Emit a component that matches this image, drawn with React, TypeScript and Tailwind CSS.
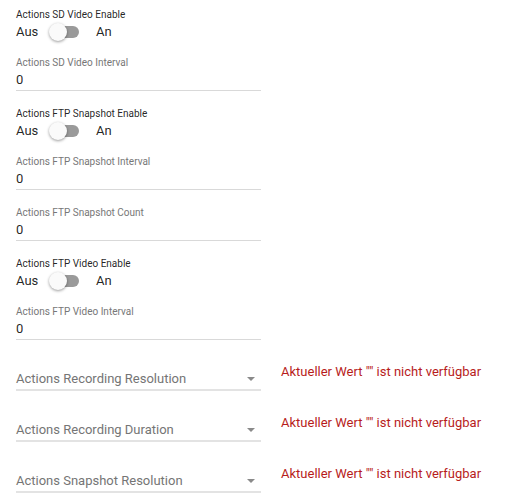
import React from "react";

const font = { fontFamily: "Roboto, 'Liberation Sans', sans-serif" };

function SwitchBlock({ label }: { label: string }) {
  return (
    <div className="flex flex-col">
      <div className="h-[12px] text-[10px] leading-[12px] text-[rgba(0,0,0,0.87)]">{label}</div>
      <div className="flex h-[22px] items-center text-[13px] text-[rgba(0,0,0,0.87)]">
        <span className="w-[32px]">Aus</span>
        <span className="relative flex h-[22px] w-[34px] items-center">
          <span className="ml-[3px] h-[12px] w-[28px] rounded-full bg-[#9a9a9a]" />
          <span className="absolute left-[1px] top-[2px] h-[18px] w-[18px] rounded-full bg-[#fafafa] shadow-[0_1px_3px_rgba(0,0,0,0.4)]" />
        </span>
        <span className="ml-[14px]">An</span>
      </div>
    </div>
  );
}

function TextBlock({ label }: { label: string }) {
  return (
    <div className="flex w-[245px] flex-col">
      <div className="h-[12px] text-[10px] leading-[12px] text-[#777]">{label}</div>
      <div className="h-[22px] border-b border-[#d9d9d9] pt-[1px] text-[13px] leading-[20px] text-[rgba(0,0,0,0.87)]">0</div>
    </div>
  );
}

function SelectBlock({ label }: { label: string }) {
  return (
    <div className="flex items-start">
      <div className="flex h-[36px] w-[245px] items-end border-b-2 border-[#e3e3e3]">
        <div className="flex h-[20px] w-full items-center justify-between text-[13px] text-[#757575]">
          <span>{label}</span>
          <svg width="8" height="4" viewBox="0 0 8 4" className="mr-[6px]">
            <path d="M0 0 L4 4 L8 0 Z" fill="#8a8a8a" />
          </svg>
        </div>
      </div>
      <div className="ml-[20px] mt-[9px] text-[13px] leading-[16px] text-[#b71c1c]">Aktueller Wert "" ist nicht verfügbar</div>
    </div>
  );
}

export default function App() {
  return (
    <div className="min-h-[500px] w-[506px] bg-white pl-[16px] pt-[9px]" style={font}>
      <SwitchBlock label="Actions SD Video Enable" />
      <div className="mt-[14px]">
        <TextBlock label="Actions SD Video Interval" />
      </div>
      <div className="mt-[17px]">
        <SwitchBlock label="Actions FTP Snapshot Enable" />
      </div>
      <div className="mt-[14px]">
        <TextBlock label="Actions FTP Snapshot Interval" />
      </div>
      <div className="mt-[17px]">
        <TextBlock label="Actions FTP Snapshot Count" />
      </div>
      <div className="mt-[17px]">
        <SwitchBlock label="Actions FTP Video Enable" />
      </div>
      <div className="mt-[14px]">
        <TextBlock label="Actions FTP Video Interval" />
      </div>
      <div className="mt-[15px]">
        <SelectBlock label="Actions Recording Resolution" />
      </div>
      <div className="mt-[15px]">
        <SelectBlock label="Actions Recording Duration" />
      </div>
      <div className="mt-[15px]">
        <SelectBlock label="Actions Snapshot Resolution" />
      </div>
    </div>
  );
}
